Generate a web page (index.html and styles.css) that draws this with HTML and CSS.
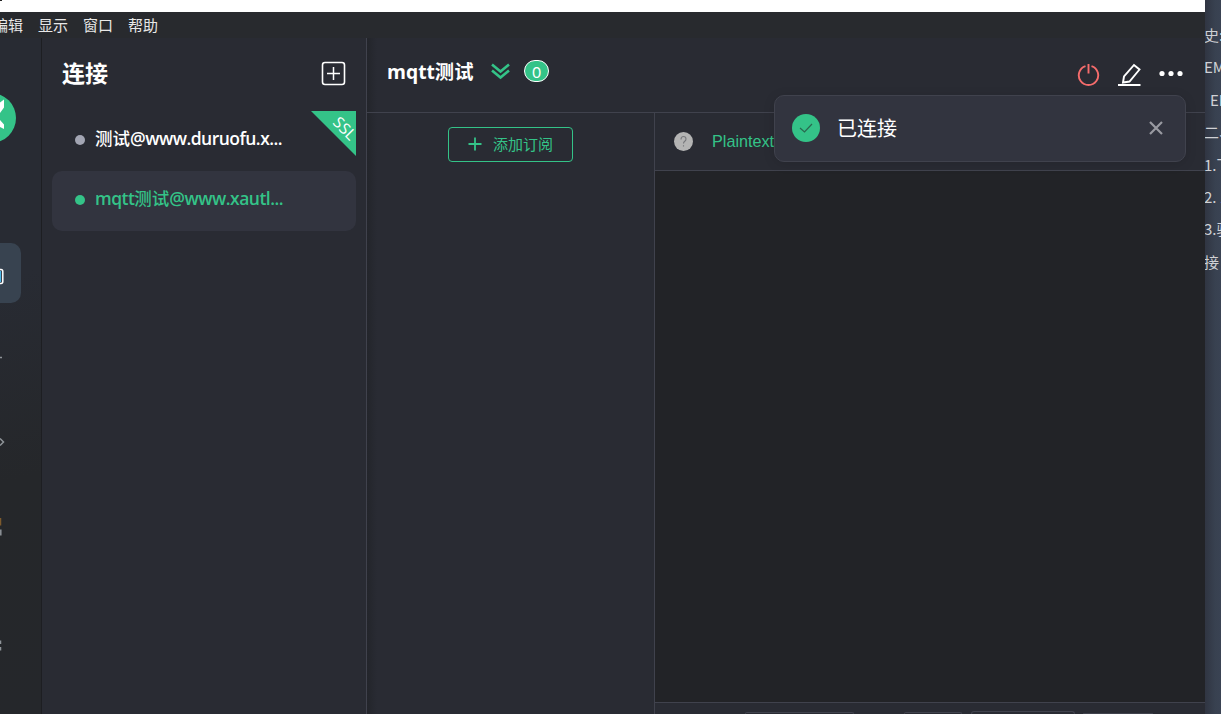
FILE: index.html
```html
<!DOCTYPE html>
<html lang="zh-CN">
<head>
<meta charset="utf-8">
<title>MQTTX</title>
<link rel="stylesheet" href="styles.css">
</head>
<body>
<div class="desktop">
  <div class="window">
    <div class="titlebar"><span class="title-mark"></span></div>
    <nav class="menubar"><span>编辑</span><span>显示</span><span>窗口</span><span>帮助</span></nav>
    <div class="app">
      <aside class="rail">
        <div class="logo"><svg width="17" height="50" viewBox="0 0 17 50"><circle cx="-9" cy="25" r="25" fill="#34c388"/><path d="M0 9.500L4 6.500V14.500L0 20ZM0 27L4 31.500V36L0 34Z" fill="#fff"/></svg></div>
        <div class="rail-active"><svg width="6" height="20" viewBox="0 0 6 20"><path d="M0 2.500H1Q2.800 2.500 2.800 4.500V14.500Q2.800 16.500 1 16.500H0" fill="none" stroke="#fff" stroke-width="1.500"/><path d="M.5 4V15" stroke="#4ab8e8"/></svg></div>
        <svg class="rail-marks" width="8" height="411" viewBox="0 303 8 411" fill="none" stroke="#8f9499" stroke-width="1.500">
          <path d="M0 357.500H2M0 438.500L3.500 442L0 445.500"/>
          <path d="M.5 518V525.500" stroke="#7d5a2c"/><path d="M.8 529.500V535.500M.5 640.500V644M.5 647V650.500"/>
        </svg>
      </aside>
      <section class="sidebar">
        <header class="side-head">
          <h1>连接</h1>
          <svg width="25" height="25" viewBox="0 0 25 25" fill="none" stroke="#fff"><rect x="1.500" y="1.500" width="22" height="22" rx="2.500" stroke-width="1.600"/><path d="M12.500 6V19M6 12.500H19" stroke-width="1.500"/></svg>
        </header>
        <div class="conn"><i class="dot"></i><span class="name"><span class="cjk">测试</span>@www.duruofu.x...</span><div class="ribbon"><b>SSL</b></div></div>
        <div class="conn active"><i class="dot"></i><span class="name">mqtt<span class="cjk">测试</span>@www.xautl...</span></div>
      </section>
      <main class="main">
        <header class="main-head">
          <h2>mqtt测试</h2>
          <svg class="chev" width="20" height="18" viewBox="0 0 20 18" fill="none" stroke="#34c388" stroke-width="2.600"><path d="M1 1.500L9.500 8.500L18 1.500M1 7.500L9.500 14.500L18 7.500"/></svg>
          <span class="badge">0</span>
          <div class="actions">
            <svg width="24" height="24" viewBox="0 0 24 24" fill="none" stroke="#f56c6c" stroke-width="1.900"><path d="M8.500 3.100A9.700 9.700 0 1 0 14.500 3.100M11.500 1V10.500"/></svg>
            <svg width="24" height="24" viewBox="0 0 24 24" fill="none" stroke="#fff" stroke-width="1.900"><path d="M5 19.500L6 13.500L16 2L21.500 6.500L11.500 18.500ZM0 22H22.500"/></svg>
            <svg width="24" height="24" viewBox="0 0 24 24" fill="#fff"><circle cx="3" cy="10.500" r="2.600"/><circle cx="12" cy="10.500" r="2.600"/><circle cx="21" cy="10.500" r="2.600"/></svg>
          </div>
        </header>
        <div class="content">
          <div class="subs"><button class="add"><svg width="14" height="14" viewBox="0 0 14 14" stroke="#34c388" stroke-width="1.800"><path d="M7 .5V13.500M.5 7H13.500"/></svg><span>添加订阅</span></button></div>
          <div class="messages">
            <div class="tools"><svg width="20" height="20" viewBox="0 0 20 20"><circle cx="10.500" cy="9.500" r="9.500" fill="#b4b4b4"/><path d="M8 7.500Q8 4.500 10.500 4.500T13 7Q13 8.500 11.500 9.500Q10.500 10.200 10.500 11.500M10.500 13.200V14.500" fill="none" stroke="#77787c" stroke-width="1.100"/></svg><span>Plaintext</span></div>
            <div class="log"></div>
            <footer class="composer"><i class="f1"></i><i class="f2"></i><i class="f3"></i><i class="f4"></i></footer>
          </div>
        </div>
        <div class="toast">
          <svg width="28" height="28" viewBox="0 0 28 28"><circle cx="14" cy="14" r="14" fill="#34c388"/><path d="M8 14L12.500 18L20 10" fill="none" stroke="#2a684f" stroke-width="1.200"/></svg>
          <span>已连接</span>
          <svg class="close" width="14" height="14" viewBox="0 0 14 14" stroke="#999aa1" stroke-width="2.200"><path d="M1 1L13 13M13 1L1 13"/></svg>
        </div>
      </main>
    </div>
  </div>
  <aside class="document"><p>史:</p><p>EM</p><p class="indent">EM</p><p>二、</p><p>1.下</p><p>2. <em>1</em></p><p>3.驱</p><p>接</p></aside>
</div>
</body>
</html>
```
FILE: styles.css
```css
* { box-sizing: border-box; }
body, h1, h2, p { margin: 0; }
body {
  font-family: "Open Sans", "Noto Sans CJK SC", sans-serif;
  color: #fff;
  background: #292b33;
  overflow: hidden;
}
svg { display: block; flex: none; }
.desktop { display: flex; width: 1221px; height: 714px; }
.window { width: 1205px; display: flex; flex-direction: column; flex: none; background: #282a2e; }
.titlebar { height: 12px; background: #fff; flex: none; }
.title-mark { display: block; width: 2px; height: 1px; background: #222; }
.menubar {
  height: 26px; flex: none; display: flex; gap: 15px; margin-left: -7px;
  font-size: 15px; line-height: 26px; color: #e8e8e8; white-space: nowrap;
}
.app { flex: 1; display: flex; min-height: 0; }
.rail {
  width: 42px; flex: none; display: flex; flex-direction: column;
  border-right: 1px solid #1d1e22;
  background: linear-gradient(165deg, #282b33 0%, #282b33 35%, #25272a 65%, #25272b 100%);
}
.logo { padding-top: 55px; height: 205px; flex: none; }
.rail-active { width: 21px; height: 60px; flex: none; background: #384350; border-radius: 0 10px 10px 0; padding-top: 24px; }
.sidebar { width: 325px; flex: none; background: #292b33; border-right: 1px solid #40424d; padding: 0 10px; }
.side-head { height: 73px; display: flex; justify-content: space-between; align-items: center; padding: 0 10px 2px 10px; }
h1 { font-size: 23px; line-height: 34px; font-weight: 700; margin-top: -2px; }
.conn { height: 60px; position: relative; display: flex; align-items: center; padding: 0 0 2px 23px; border-radius: 10px; }
.dot { width: 10px; height: 10px; border-radius: 5px; background: #a2a5b3; margin: 0 10px 0 0; }
.active .dot { background: #34c388; }
.name { font-size: 17.500px; font-weight: 600; letter-spacing: -.52px; line-height: 24px; white-space: nowrap; margin-top: -4px; }
.cjk { font-weight: 500; letter-spacing: 0; }
.active { background: #32343f; color: #34c388; }
.ribbon { position: absolute; right: 0; top: 0; width: 45px; height: 45px; background: #34c388; clip-path: polygon(0 0, 100% 0, 100% 100%); }
.ribbon b { position: absolute; left: 20px; top: 7px; width: 28px; font-size: 15.500px; font-weight: 400; line-height: 20px; text-align: center; transform: rotate(45deg); }
.main { flex: 1; min-width: 0; display: flex; flex-direction: column; position: relative; background: linear-gradient(90deg, #23252b, #292b33 10px); }
.main-head { height: 75px; flex: none; display: flex; align-items: center; padding: 0 22px 8px 20px; border-bottom: 1px solid #40424d; }
h2 { font-size: 19.300px; line-height: 28px; font-weight: 700; white-space: nowrap; width: 87px; margin-top: 2px; }
.chev { margin: 2px 13px 0 17px; }
.badge { width: 25px; height: 22px; border: 1px solid #fff; border-radius: 11px; background: #34c388; font: 15px/22px Lato, sans-serif; text-align: center; }
.actions { display: flex; gap: 17px; margin: 7px 0 0 auto; }
.content { flex: 1; display: flex; min-height: 0; }
.subs { width: 288px; flex: none; border-right: 1px solid #40424d; padding: 14px 0 0 81px; }
.add { display: flex; width: 125px; height: 35px; border: 1px solid #34c388; border-radius: 4px; background: none; color: #34c388; align-items: center; gap: 11px; padding: 0 0 2px 19px; font: 15px/22px "Noto Sans CJK SC", sans-serif; white-space: nowrap; }
.messages { flex: 1; min-width: 0; display: flex; flex-direction: column; }
.tools { height: 58px; flex: none; display: flex; align-items: center; gap: 19px; padding-left: 18px; border-bottom: 1px solid #40424d; font: 16.200px "Liberation Sans", sans-serif; color: #34c388; background: #292b33; }
.log { flex: 1; background: #222327; }
.composer { height: 12px; flex: none; display: flex; align-items: flex-end; border-top: 1px solid #40424d; background: #292b33; overflow: hidden; }
.composer i { height: 2px; border: 1px solid #40424d; border-bottom: 0; border-radius: 4px 4px 0 0; flex: none; }
.composer .f1 { width: 109px; margin-left: 90px; }
.composer .f2 { width: 58px; margin-left: 50px; }
.composer .f3 { width: 104px; height: 3px; margin-left: 9px; }
.composer .f4 { width: 70px; height: 1px; margin-left: 8px; }
.toast { position: absolute; left: 407px; top: 57px; width: 412px; height: 67px; display: flex; align-items: center; border: 1px solid #40424d; border-radius: 10px; background: #32343f; padding: 0 22px 2px 17px; box-shadow: 0 2px 12px rgba(0,0,0,.12); }
.toast span { font-size: 20px; line-height: 28px; margin: 2px 0 0 17px; }
.close { margin-left: auto; }
.document { width: 16px; overflow: hidden; padding-top: 19px; background: linear-gradient(90deg, #303542, #384150 10px, #3a4353); font: 15px/32.400px "Noto Sans CJK SC", sans-serif; color: #cfd1d5; white-space: nowrap; }
.document p { margin-left: -1px; }
.document .indent { margin-left: 5px; }
.document em { color: #3983db; font-style: normal; }
```
